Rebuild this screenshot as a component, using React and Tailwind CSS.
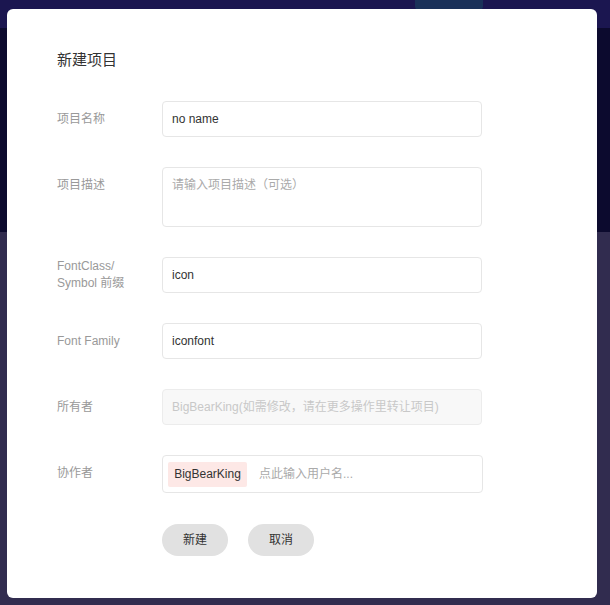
export default function App() {
    const font = { fontFamily: '"Liberation Sans", "Noto Sans CJK SC", sans-serif' };

    const Row = ({ label, children }) => (
        <div className="flex items-start">
            <div className="w-[105px] min-h-[36px] flex items-center text-[12px] leading-[17px] text-[#999]">
                {label}
            </div>
            {children}
        </div>
    );

    return (
        <div className="relative w-[610px] h-[605px] overflow-hidden bg-[#312c4f]" style={font}>
            {/* page behind the overlay */}
            <div className="h-[28px] bg-[#1b1650] flex items-start pl-[415px]">
                <div className="w-[68px] h-[10px] rounded-b bg-[#1a3159]" />
            </div>
            <div className="h-[204px] bg-[#0c0a2e]" />

            {/* dialog */}
            <div className="absolute left-[7px] top-[9px] w-[590px] h-[589px] bg-white rounded-[6px] pl-[50px] pt-[41px]">
                <h2 className="text-[15px] leading-[20px] text-[#333] font-normal">新建项目</h2>

                <div className="mt-[31px] flex flex-col gap-[30px]">
                    <Row label="项目名称">
                        <div className="w-[320px] h-[36px] border border-[#e6e6e6] rounded-[4px] pl-[9px] flex items-center text-[12px] text-[#333]">
                            no name
                        </div>
                    </Row>
                    <Row label="项目描述">
                        <div className="w-[320px] h-[60px] border border-[#e6e6e6] rounded-[4px] pl-[9px] pt-[9px] text-[12px] leading-[17px] text-[#aaa]">
                            请输入项目描述（可选）
                        </div>
                    </Row>
                    <Row label={<span>FontClass/<br />Symbol 前缀</span>}>
                        <div className="w-[320px] h-[36px] border border-[#e6e6e6] rounded-[4px] pl-[9px] flex items-center text-[12px] text-[#333]">
                            icon
                        </div>
                    </Row>
                    <Row label="Font Family">
                        <div className="w-[320px] h-[36px] border border-[#e6e6e6] rounded-[4px] pl-[9px] flex items-center text-[12px] text-[#333]">
                            iconfont
                        </div>
                    </Row>
                    <Row label="所有者">
                        <div className="w-[320px] h-[36px] border border-[#ececec] bg-[#f8f8f8] rounded-[4px] pl-[9px] flex items-center text-[12px] text-[#c8c8c8]">
                            BigBearKing(如需修改，请在更多操作里转让项目)
                        </div>
                    </Row>
                    <Row label="协作者">
                        <div className="w-[321px] h-[38px] border border-[#e6e6e6] rounded-[4px] pl-[5px] flex items-center gap-[12px] text-[12px]">
                            <span className="h-[25px] w-[79px] flex items-center justify-center rounded-[2px] bg-[#fde8e6] text-[#333]">
                                BigBearKing
                            </span>
                            <span className="text-[#aaa]">点此输入用户名...</span>
                        </div>
                    </Row>
                </div>

                <div className="mt-[31px] ml-[105px] flex gap-[20px]">
                    <button className="w-[66px] h-[32px] rounded-full bg-[#e1e1e1] text-[12px] text-[#333]">新建</button>
                    <button className="w-[66px] h-[32px] rounded-full bg-[#e1e1e1] text-[12px] text-[#333]">取消</button>
                </div>
            </div>
        </div>
    );
}
